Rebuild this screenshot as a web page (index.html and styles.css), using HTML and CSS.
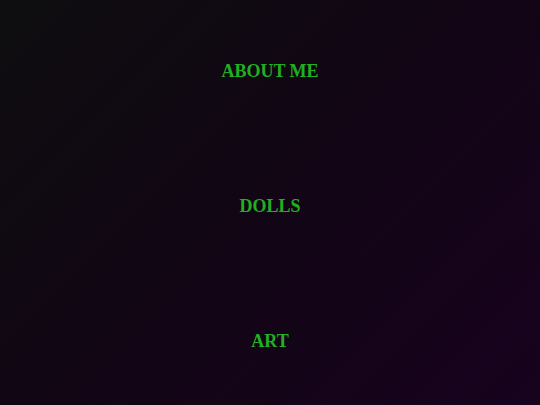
FILE: index.html
```html
<!DOCTYPE html>
<html lang="en">
<head>
	<meta charset="UTF-8">
	<title>Home</title>
	<link rel="stylesheet" href="styles.css">
</head>
<body>
	<nav class="menu">
		<a href="#about" class="menu-link">ABOUT ME</a>
		<a href="#dolls" class="menu-link">DOLLS</a>
		<a href="#art" class="menu-link">ART</a>
	</nav>
</body>
</html>
```
FILE: styles.css
```css
*{margin:0;padding:0;box-sizing:border-box;}
html,body{height:100%;}
body{background:linear-gradient(135deg,#0e0e0f 0%,#110614 45%,#18021e 100%);font-family:"Liberation Serif","DejaVu Serif",serif;}
.menu{display:flex;flex-direction:column;align-items:center;gap:115px;padding-top:61px;}
.menu-link{display:block;height:20px;line-height:20px;font-size:18px;font-weight:bold;color:#20b020;text-decoration:none;}
```
